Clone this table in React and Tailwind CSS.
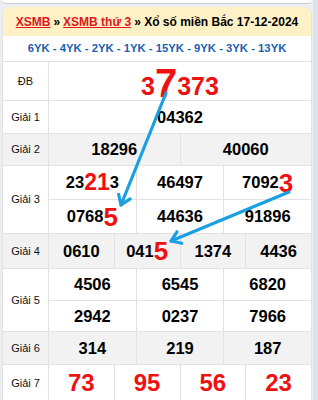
import React from 'react';

const RED = 'text-[#ee1111]';

function Cell({ children, className = '' }) {
    return (
        <div className={`flex-1 flex items-center justify-center border-l border-[#e2e2e2] ${className}`}>
            {children}
        </div>
    );
}

function Num({ children }) {
    return <span className="text-[16.5px] font-bold text-black leading-none">{children}</span>;
}

function Row({ label, gray, h, multi, children }) {
    return (
        <div className={`flex ${h} border-t border-[#e2e2e2] ${gray ? 'bg-[#f2f2f2]' : 'bg-white'}`}>
            <div className="w-[45px] shrink-0 flex items-center justify-center text-[11px] text-[#111]">
                {label}
            </div>
            <div className={`flex-1 flex ${multi ? 'flex-col' : ''}`}>{children}</div>
        </div>
    );
}

function SubRow({ children, top }) {
    return <div className={`flex flex-1 ${top ? 'border-t border-[#e2e2e2]' : ''}`}>{children}</div>;
}

// arrow from (x1,y1) to tip (x2,y2)
function Arrow({ x1, y1, x2, y2 }) {
    const a = Math.atan2(y2 - y1, x2 - x1);
    const len = 11;
    const spread = 0.6;
    const p1 = [x2 - len * Math.cos(a - spread), y2 - len * Math.sin(a - spread)];
    const p2 = [x2 - len * Math.cos(a + spread), y2 - len * Math.sin(a + spread)];
    return (
        <g stroke="#1a9fe3" strokeWidth="3.2" fill="none" strokeLinecap="round" strokeLinejoin="round">
            <line x1={x1} y1={y1} x2={x2} y2={y2} />
            <polyline points={`${p1[0]},${p1[1]} ${x2},${y2} ${p2[0]},${p2[1]}`} />
        </g>
    );
}

export default function App() {
    const g4 = ['0610', null, '1374', '4436'];

    return (
        <div className="min-h-screen w-[318px] bg-[#eceef1] flex font-['Liberation_Sans',Arial,sans-serif]">
            <div className="w-[313px]">
                {/* previous box edge */}
                <div className="ml-[2px] w-[310px] h-[4px] bg-white border-b border-[#c9cdd2] rounded-b-[4px]" />

                <div className="relative ml-[2px] mt-[3px] w-[310px] bg-white border-x border-[#e2e2e2] rounded-t-[8px] overflow-hidden">
                    {/* Header */}
                    <div className="h-[29px] bg-[#fdf1c5] flex items-center justify-center text-[12px] font-bold text-black whitespace-nowrap">
                        <span className="text-[#e0161c] underline">XSMB</span>
                        <span className="mx-[3px]">»</span>
                        <span className="text-[#e0161c] underline">XSMB thứ 3</span>
                        <span className="ml-[3px]">» Xổ số miền Bắc 17-12-2024</span>
                    </div>

                    {/* Codes */}
                    <div className="h-[25px] flex items-center justify-center text-[11.3px] font-bold text-[#1a5fb4] whitespace-nowrap">
                        6YK - 4YK - 2YK - 1YK - 15YK - 9YK - 3YK - 13YK
                    </div>

                    <Row label="ĐB" h="h-[39px]">
                        <Cell>
                            <span className={`${RED} font-bold text-[25px] leading-none`}>
                                3<span className="text-[40px] relative top-[2px]">7</span>373
                            </span>
                        </Cell>
                    </Row>

                    <Row label="Giải 1" h="h-[33px]">
                        <Cell><Num>04362</Num></Cell>
                    </Row>

                    <Row label="Giải 2" gray h="h-[32px]">
                        <Cell><Num>18296</Num></Cell>
                        <Cell><Num>40060</Num></Cell>
                    </Row>

                    <Row label="Giải 3" h="h-[68px]" multi>
                        <SubRow>
                            <Cell>
                                <Num>23</Num>
                                <span className={`${RED} text-[23px] font-bold leading-none`}>21</span>
                                <Num>3</Num>
                            </Cell>
                            <Cell><Num>46497</Num></Cell>
                            <Cell>
                                <Num>7092</Num>
                                <span className={`${RED} text-[26px] font-bold leading-none`}>3</span>
                            </Cell>
                        </SubRow>
                        <SubRow top>
                            <Cell>
                                <Num>0768</Num>
                                <span className={`${RED} text-[26px] font-bold leading-none`}>5</span>
                            </Cell>
                            <Cell><Num>44636</Num></Cell>
                            <Cell><Num>91896</Num></Cell>
                        </SubRow>
                    </Row>

                    <Row label="Giải 4" gray h="h-[35px]">
                        {g4.map((n, i) => (
                            <Cell key={i}>
                                {n ? (
                                    <Num>{n}</Num>
                                ) : (
                                    <>
                                        <Num>041</Num>
                                        <span className={`${RED} text-[26px] font-bold leading-none`}>5</span>
                                    </>
                                )}
                            </Cell>
                        ))}
                    </Row>

                    <Row label="Giải 5" h="h-[63px]" multi>
                        <SubRow>
                            <Cell><Num>4506</Num></Cell>
                            <Cell><Num>6545</Num></Cell>
                            <Cell><Num>6820</Num></Cell>
                        </SubRow>
                        <SubRow top>
                            <Cell><Num>2942</Num></Cell>
                            <Cell><Num>0237</Num></Cell>
                            <Cell><Num>7966</Num></Cell>
                        </SubRow>
                    </Row>

                    <Row label="Giải 6" gray h="h-[33px]">
                        <Cell><Num>314</Num></Cell>
                        <Cell><Num>219</Num></Cell>
                        <Cell><Num>187</Num></Cell>
                    </Row>

                    <Row label="Giải 7" h="h-[37px]">
                        {['73', '95', '56', '23'].map((n) => (
                            <Cell key={n}>
                                <span className={`${RED} text-[24px] font-bold leading-none`}>{n}</span>
                            </Cell>
                        ))}
                    </Row>

                    {/* arrows drawn over the table */}
                    <svg className="absolute inset-0 pointer-events-none" width="310" height="400">
                        <Arrow x1={163} y1={86} x2={118} y2={198} />
                        <Arrow x1={286} y1={185} x2={168} y2={234} />
                    </svg>
                </div>
            </div>
            <div className="w-[5px] bg-[#dce3ec]" />
        </div>
    );
}
